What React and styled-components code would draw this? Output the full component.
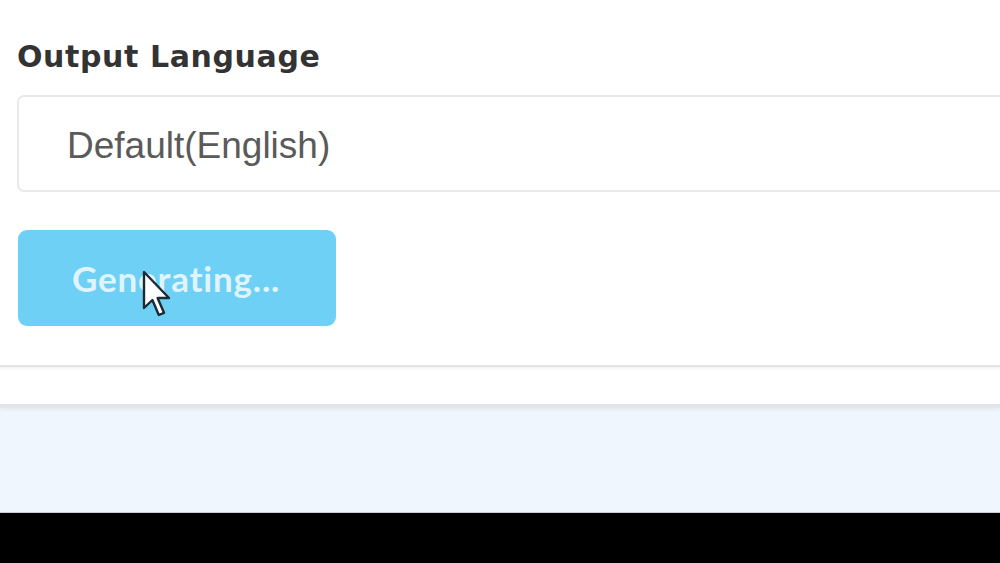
import React from 'react';
import styled, { createGlobalStyle } from 'styled-components';

const GlobalStyle = createGlobalStyle`
  html, body {
    margin: 0;
    padding: 0;
    background: #000;
  }
  * { box-sizing: border-box; }
`;

const Page = styled.div`
  width: 1000px;
  height: 563px;
  display: flex;
  flex-direction: column;
  overflow: hidden;
  background: #000;
`;

const FormCard = styled.section`
  height: 367px;
  background: #fff;
  padding: 36px 0 0 17px;
  display: flex;
  flex-direction: column;
  border-bottom: 2px solid #e4e4e4;
  box-shadow: 0 1px 3px rgba(0, 0, 0, 0.08);
  position: relative;
  z-index: 1;
`;

const Label = styled.label`
  font-family: 'DejaVu Sans', 'Open Sans', sans-serif;
  font-weight: 700;
  font-size: 30px;
  line-height: 42px;
  color: #333;
  letter-spacing: 0.6px;
`;

const SelectBox = styled.div`
  margin-top: 17px;
  margin-right: -20px;
  height: 97px;
  border: 2px solid #e9e9e9;
  border-right: none;
  border-radius: 7px 0 0 7px;
  display: flex;
  align-items: center;
  padding-left: 48px;
  padding-top: 4px;
  font-family: 'Liberation Sans', Arial, sans-serif;
  font-size: 37px;
  color: #5a5a5a;
`;

const SubmitButton = styled.button`
  margin-top: 38px;
  margin-left: 1px;
  width: 318px;
  height: 96px;
  border: none;
  border-radius: 9px;
  background: #6fd0f6;
  color: rgba(255, 255, 255, 0.8);
  font-family: Lato, 'Open Sans', sans-serif;
  font-weight: 700;
  font-size: 35px;
  letter-spacing: 0.8px;
  padding-left: 54px;
  text-align: left;
  position: relative;
  cursor: not-allowed;
`;

const Pointer = styled.svg`
  position: absolute;
  left: 124px;
  top: 40px;
  width: 32px;
  height: 50px;
`;

const Spacer = styled.div`
  height: 41px;
  background: #fff;
  border-bottom: 4px solid #e3e5e7;
  box-shadow: 0 2px 3px rgba(0, 0, 0, 0.05);
  position: relative;
`;

const InfoPanel = styled.div`
  height: 105px;
  background: #eff6fd;
  border-bottom: 1px solid #c9ced6;
`;

const VideoBar = styled.div`
  flex: 1;
  background: #000;
`;

const Cursor = () => (
  <Pointer viewBox="0 0 16 25">
    <path
      d="M1 1 L1 19 L5.2 15 L8.4 22.5 L11 21.4 L7.8 14 L13.5 14 Z"
      fill="#fff"
      stroke="#1c2a33"
      strokeWidth="1.2"
      strokeLinejoin="round"
    />
  </Pointer>
);

export default function App() {
  return (
    <>
      <GlobalStyle />
      <Page>
        <FormCard>
          <Label>Output Language</Label>
          <SelectBox>Default(English)</SelectBox>
          <div>
            <SubmitButton disabled>
              Generating...
              <Cursor />
            </SubmitButton>
          </div>
        </FormCard>
        <Spacer />
        <InfoPanel />
        <VideoBar />
      </Page>
    </>
  );
}
